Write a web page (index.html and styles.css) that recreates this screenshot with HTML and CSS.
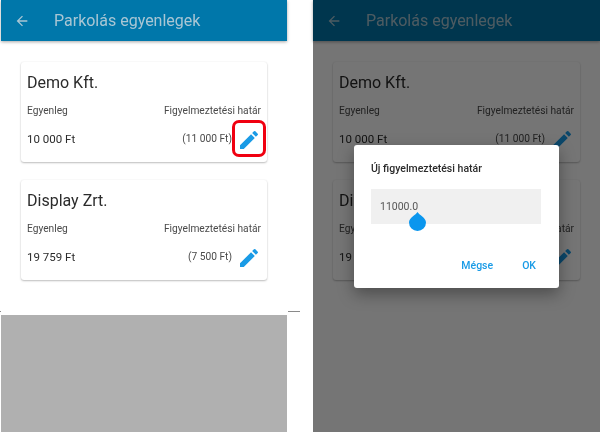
FILE: index.html
```html
<!DOCTYPE html>
<html lang="hu">
<head>
<meta charset="utf-8">
<title>Parkolás egyenlegek</title>
<link rel="stylesheet" href="styles.css">
</head>
<body>
<div class="shots">
  <section class="phone phone-left">
    <header class="appbar">
      <svg class="back" viewBox="0 0 24 24"><path d="M20 11H7.830l5.590-5.590L12 4l-8 8 8 8 1.410-1.410L7.830 13H20z"/></svg>
      <h1 class="appbar-title">Parkolás egyenlegek</h1>
    </header>
    <main class="list">
      <article class="card">
        <h2 class="card-title">Demo Kft.</h2>
        <div class="row labels"><span>Egyenleg</span><span>Figyelmeztetési határ</span></div>
        <div class="row values"><span>10 000 Ft</span><span class="limit">(11 000 Ft)<svg class="pencil" viewBox="0 0 24 24"><path d="M3 17.250V21h3.750L17.810 9.940l-3.750-3.750L3 17.250zM20.710 7.040a1 1 0 0 0 0-1.410l-2.340-2.340a1 1 0 0 0-1.410 0l-1.830 1.830 3.750 3.750 1.830-1.830z"/></svg><i class="mark"></i></span></div>
      </article>
      <article class="card">
        <h2 class="card-title">Display Zrt.</h2>
        <div class="row labels"><span>Egyenleg</span><span>Figyelmeztetési határ</span></div>
        <div class="row values"><span>19 759 Ft</span><span class="limit">(7 500 Ft)<svg class="pencil" viewBox="0 0 24 24"><path d="M3 17.250V21h3.750L17.810 9.940l-3.750-3.750L3 17.250zM20.710 7.040a1 1 0 0 0 0-1.410l-2.340-2.340a1 1 0 0 0-1.410 0l-1.830 1.830 3.750 3.750 1.830-1.830z"/></svg></span></div>
      </article>
    </main>
    <div class="lower"></div>
  </section>
  <i class="tick"></i>
  <i class="tick tick-edge"></i>
  <section class="phone phone-right">
    <header class="appbar">
      <svg class="back" viewBox="0 0 24 24"><path d="M20 11H7.830l5.590-5.590L12 4l-8 8 8 8 1.410-1.410L7.830 13H20z"/></svg>
      <h1 class="appbar-title">Parkolás egyenlegek</h1>
    </header>
    <main class="list">
      <article class="card">
        <h2 class="card-title">Demo Kft.</h2>
        <div class="row labels"><span>Egyenleg</span><span>Figyelmeztetési határ</span></div>
        <div class="row values"><span>10 000 Ft</span><span class="limit">(11 000 Ft)<svg class="pencil" viewBox="0 0 24 24"><path d="M3 17.250V21h3.750L17.810 9.940l-3.750-3.750L3 17.250zM20.710 7.040a1 1 0 0 0 0-1.410l-2.340-2.340a1 1 0 0 0-1.410 0l-1.830 1.830 3.750 3.750 1.830-1.830z"/></svg></span></div>
      </article>
      <article class="card">
        <h2 class="card-title">Display Zrt.</h2>
        <div class="row labels"><span>Egyenleg</span><span>Figyelmeztetési határ</span></div>
        <div class="row values"><span>19 759 Ft</span><span class="limit">(7 500 Ft)<svg class="pencil" viewBox="0 0 24 24"><path d="M3 17.250V21h3.750L17.810 9.940l-3.750-3.750L3 17.250zM20.710 7.040a1 1 0 0 0 0-1.410l-2.340-2.340a1 1 0 0 0-1.410 0l-1.830 1.830 3.750 3.750 1.830-1.830z"/></svg></span></div>
      </article>
    </main>
    <div class="scrim"></div>
    <div class="dialog">
      <h3 class="dialog-title">Új figyelmeztetési határ</h3>
      <div class="field">11000.0<svg class="handle" viewBox="0 0 17 19"><path d="M8.500 0 C10 3 17 5.500 17 10.500 A8.500 8.500 0 0 1 0 10.500 C0 5.500 7 3 8.500 0z"/></svg></div>
      <div class="actions"><span>Mégse</span><span>OK</span></div>
    </div>
  </section>
</div>
</body>
</html>
```
FILE: styles.css
```css
* { box-sizing: border-box; }
html, body { margin: 0; height: 100%; background: #fff; overflow: hidden; }
body { font-family: Roboto, "Liberation Sans", sans-serif; color: #2b2b2b; }
h1, h2, h3 { margin: 0; font-weight: 400; }

.shots { display: flex; width: 600px; height: 432px; position: relative; filter: blur(0.45px); }
.phone { position: relative; height: 432px; display: flex; flex-direction: column; background: #fff; flex: none; }
.phone-left { width: 286px; margin-left: 1px; }
.phone-right { width: 287px; margin-left: 26px; }
.tick { position: absolute; left: 288px; top: 311px; width: 12px; height: 1px; background: #8a8a8a; }
.tick-edge { left: 0; width: 1px; }

.appbar { height: 41px; flex: none; background: #0077aa; display: flex; align-items: center; padding-left: 13px; box-shadow: 0 1px 3px rgba(0,0,0,.35); position: relative; color: #a9c6d4; }
.back { width: 16px; height: 16px; fill: #a9c6d4; flex: none; }
.appbar-title { font-size: 16px; margin-left: 24px; line-height: 1; }

.list { padding: 21px 20px 0; display: flex; flex-direction: column; gap: 18px; height: 274px; flex: none; }
.card { height: 100px; background: #fff; border-radius: 3px; box-shadow: 0 1px 2px rgba(0,0,0,.25), 0 0 2px rgba(0,0,0,.06); padding: 0 6px; display: flex; flex-direction: column; }
.card-title { font-size: 16px; line-height: 20px; margin-top: 11px; }
.row { display: flex; justify-content: space-between; align-items: center; }
.labels { font-size: 10.200px; color: #4a4a4a; line-height: 14px; margin-top: 11px; }
.values { font-size: 11.500px; line-height: 16px; margin-top: 13px; }
.limit { display: flex; align-items: center; position: relative; color: #4a4a4a; font-size: 10.200px; padding-right: 29px; }
.pencil { position: absolute; right: 0; top: -3px; width: 24px; height: 24px; fill: #1a9be6; }
.mark { position: absolute; right: -5px; top: -11px; width: 34px; height: 37px; border: 3px solid #f00010; border-radius: 7px; }

.lower { flex: none; height: 117px; background: #b0b0b0; }

.scrim { position: absolute; inset: 0; background: rgba(0,0,0,.54); }

.dialog { position: absolute; left: 41px; top: 145px; width: 205px; height: 143px; background: #fff; border-radius: 3px; box-shadow: 0 6px 16px rgba(0,0,0,.35); padding: 18px 18px 0 17px; display: flex; flex-direction: column; }
.dialog-title { font-size: 10.500px; font-weight: 500; line-height: 12px; color: #2b2b2b; }
.field { position: relative; margin-top: 14px; height: 35px; background: #f0f0f0; padding: 12px 0 0 9px; font-size: 10.500px; line-height: 12px; color: #555; }
.handle { position: absolute; left: 38px; top: 23px; width: 17px; height: 19px; fill: #0a96ee; }
.actions { display: flex; justify-content: flex-end; gap: 29px; margin-top: 36px; padding-right: 5px; font-size: 10.500px; font-weight: 500; color: #1a9be6; line-height: 12px; }
```
